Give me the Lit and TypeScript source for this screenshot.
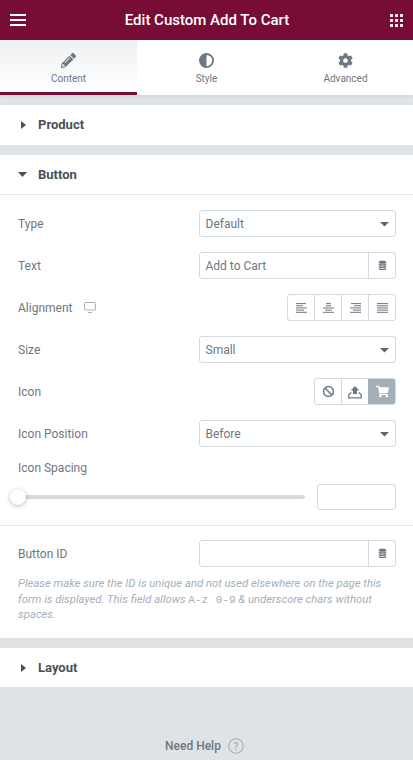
import { LitElement, html, css, svg } from "lit";
import { customElement } from "lit/decorators.js";

const db = html`<svg class="db" viewBox="0 0 12 14"><ellipse cx="6" cy="2.6" rx="5" ry="2.2"/><path d="M1 4.3c1 1.4 9 1.4 10 0v2c-1 1.5-9 1.5-10 0zM1 7.3c1 1.4 9 1.4 10 0v2c-1 1.5-9 1.5-10 0zM1 10.2c1 1.4 9 1.4 10 0v1.3c-.6 2.2-9.4 2.2-10 0z"/></svg>`;
const caret = html`<svg class="sel-caret" viewBox="0 0 10 5"><path d="M0 0h10L5 5z"/></svg>`;
const alignLines = (rows: [number, number][]) => html`<svg class="al" viewBox="0 0 11 10">${rows.map(([x, w], i) => svg`<rect x=${x} y=${i * 2.2} width=${w} height="1.1"/>`)}</svg>`;

@customElement("app-root")
export class AppRoot extends LitElement {
  static styles = css`
    :host { display: block; width: 413px; height: 760px; overflow: hidden; background: #e0e3e6; font-family: Roboto, "Liberation Sans", sans-serif; color: #6d7882; font-size: 12px; }
    * { box-sizing: border-box; }
    .top { height: 40px; background: #770c36; display: flex; align-items: center; justify-content: space-between; padding: 0 10px; color: #fff; }
    .top h1 { margin: 0 2px 0 0; font-size: 15px; font-weight: 500; line-height: 40px; }
    .burger { width: 16px; height: 12px; display: flex; flex-direction: column; justify-content: space-between; }
    .burger i { display: block; height: 2px; background: #fff; }
    .apps { width: 13px; height: 13px; display: grid; grid-template-columns: repeat(3, 3px); grid-template-rows: repeat(3, 3px); gap: 2px; }
    .apps i { background: #f4e8ed; }
    .tabs { height: 55px; display: grid; grid-template-columns: 137px 139px 139px; background: #fff; box-shadow: 0 1px 3px rgba(0,0,0,.08); position: relative; overflow: visible; }
    .tab { display: flex; flex-direction: column; align-items: center; padding-top: 13px; font-size: 10px; line-height: 12px; color: #6d7882; }
    .tab.active { background: linear-gradient(#eef0f2, #fff); border-bottom: 3px solid #770c36; }
    .tab svg { width: 15px; height: 15px; fill: #6d7882; margin-bottom: 5px; display: block; }
    .sec { background: #fff; margin-top: 10px; }
    .sec-h { height: 40px; padding-bottom: 1px; display: flex; align-items: center; padding-left: 21px; font-size: 13px; font-weight: 700; color: #495157; }
    .sec-h.short { height: 39px; padding-bottom: 0; }
    .sec-h .tri { width: 12px; display: flex; margin-right: 5px; }
    .sec-h svg { fill: #495157; }
    .sec-open .sec-h { height: 40px; border-bottom: 1px solid #e6e9ec; padding: 0 0 0 18px; }
    .sec-open .sec-h .tri { width: 15px; margin-right: 5px; }
    .body { padding: 15px 17px 16px 18px; }
    .row { height: 27px; display: flex; align-items: center; justify-content: space-between; margin-bottom: 15px; }
    .lbl { display: flex; align-items: center; gap: 12px; }
    .lbl svg { width: 12px; height: 11px; }
    .ctrl { width: 197px; height: 27px; border: 1px solid #d5dadf; border-radius: 3px; display: flex; align-items: center; padding-left: 5.5px; background: #fff; color: #6d7882; position: relative; }
    .sel-caret { position: absolute; right: 6px; top: 11px; width: 9px; height: 4.5px; fill: #5b6670; }
    .with-db { padding-left: 0; }
    .with-db span { flex: 1; padding-left: 5.5px; }
    .dbbox { width: 27px; height: 25px; border-left: 1px solid #d5dadf; display: flex; align-items: center; justify-content: center; }
    .db { width: 9px; height: 11px; fill: #6d7882; }
    .btns { display: flex; border: 1px solid #d5dadf; border-radius: 3px; height: 27px; overflow: hidden; }
    .btns div { width: 27px; display: flex; align-items: center; justify-content: center; border-left: 1px solid #d5dadf; }
    .btns div:first-child { border-left: 0; width: 26px; }
    .btns .on { background: #a4afb7; border-color: #a4afb7; }
    .al { width: 11px; height: 10px; fill: #7a848d; }
    .ic { width: 13px; height: 13px; display: block; }
    .ic.up { width: 14px; height: 14px; }
    .slabel { height: 14px; line-height: 14px; margin-top: -1px; }
    .slider { display: flex; align-items: center; justify-content: space-between; margin-top: 9px; height: 26px; }
    .track { width: 287px; height: 4px; background: #d5dadf; border-radius: 2px; position: relative; }
    .knob { position: absolute; left: -8px; top: -6px; width: 16px; height: 16px; border-radius: 50%; background: #fff; box-shadow: 0 1px 4px rgba(0,0,0,.28); }
    .num { width: 79px; height: 26px; border: 1px solid #d5dadf; border-radius: 3px; background: #fff; }
    .body.first { padding-bottom: 15px; border-bottom: 1px solid #e6e9ec; }
    .row.last { margin-bottom: 0; }
    .body.second { padding: 14px 17px 0 18px; height: 112px; }
    .help { margin-top: 9px; font-size: 11.3px; font-style: italic; line-height: 15.5px; color: #a4afb7; }
    .help code { font-family: "Liberation Mono", monospace; font-size: 11px; line-height: 1; font-style: normal; word-spacing: 1px; }
    .foot { display: flex; align-items: center; justify-content: center; gap: 7px; margin-top: 50px; padding-right: 4px; font-weight: 500; font-size: 12px; color: #6d7882; height: 18px; }
    .foot svg { width: 16px; height: 16px; }
  `;

  render() {
    const right = html`<svg width="5" height="8" viewBox="0 0 5 8"><path d="M0 0l5 4-5 4z"/></svg>`;
    return html`
      <div class="top">
        <div class="burger"><i></i><i></i><i></i></div>
        <h1>Edit Custom Add To Cart</h1>
        <div class="apps">${Array.from({ length: 9 }, () => html`<i></i>`)}</div>
      </div>
      <div class="tabs">
        <div class="tab active">
          <svg viewBox="0 0 512 512"><path d="M497.9 142.1l-46.1 46.1c-4.7 4.7-12.3 4.7-17 0l-111-111c-4.7-4.7-4.7-12.3 0-17l46.1-46.1c18.7-18.7 49.1-18.7 67.9 0l60.1 60.1c18.8 18.7 18.8 49.1 0 67.9zM284.2 99.8L21.6 362.4.4 483.9c-2.9 16.4 11.4 30.6 27.8 27.8l121.5-21.3 262.6-262.6c4.7-4.7 4.7-12.3 0-17l-111-111c-4.8-4.7-12.4-4.7-17.1 0zM124.1 339.9c-5.5-5.5-5.5-14.3 0-19.8l154-154c5.5-5.5 14.3-5.5 19.8 0s5.5 14.3 0 19.8l-154 154c-5.5 5.5-14.3 5.5-19.8 0zM88 424h48v36.3l-64.5 11.3-31.1-31.1L51.7 376H88v48z"/></svg>
          Content
        </div>
        <div class="tab">
          <svg viewBox="0 0 16 16"><path fill-rule="evenodd" d="M8 0a8 8 0 1 0 0 16A8 8 0 0 0 8 0zm0 2v12a6 6 0 0 0 0-12z"/></svg>
          Style
        </div>
        <div class="tab">
          <svg viewBox="0 0 512 512"><path d="M487.4 315.7l-42.6-24.6c4.3-23.2 4.3-47 0-70.2l42.6-24.6c4.9-2.8 7.1-8.6 5.5-14-11.1-35.6-30-67.8-54.7-94.6-3.8-4.1-10-5.1-14.8-2.3L380.8 110c-17.9-15.4-38.5-27.3-60.8-35.1V25.8c0-5.6-3.9-10.5-9.4-11.7-36.7-8.2-74.3-7.8-109.2 0-5.5 1.2-9.4 6.1-9.4 11.7V75c-22.2 7.9-42.8 19.8-60.8 35.1L88.7 85.5c-4.9-2.8-11-1.9-14.8 2.3-24.7 26.7-43.6 58.9-54.7 94.6-1.7 5.4.6 11.2 5.5 14L67.3 221c-4.3 23.2-4.3 47 0 70.2l-42.6 24.6c-4.9 2.8-7.1 8.6-5.5 14 11.1 35.6 30 67.8 54.7 94.6 3.8 4.1 10 5.1 14.8 2.3l42.6-24.6c17.9 15.4 38.5 27.3 60.8 35.1v49.2c0 5.6 3.9 10.5 9.4 11.7 36.7 8.2 74.3 7.8 109.2 0 5.5-1.2 9.4-6.1 9.4-11.7v-49.2c22.2-7.9 42.8-19.8 60.8-35.1l42.6 24.6c4.9 2.8 11 1.9 14.8-2.3 24.7-26.7 43.6-58.9 54.7-94.6 1.5-5.5-.7-11.3-5.6-14.1zM256 336c-44.1 0-80-35.9-80-80s35.9-80 80-80 80 35.9 80 80-35.9 80-80 80z"/></svg>
          Advanced
        </div>
      </div>

      <section class="sec"><div class="sec-h"><span class="tri">${right}</span>Product</div></section>

      <section class="sec sec-open">
        <div class="sec-h"><span class="tri"><svg width="9" height="5" viewBox="0 0 9 5"><path d="M0 0h9L4.5 5z"/></svg></span>Button</div>
        <div class="body first">
          <div class="row"><div class="lbl">Type</div><div class="ctrl">Default${caret}</div></div>
          <div class="row"><div class="lbl">Text</div><div class="ctrl with-db"><span>Add to Cart</span><div class="dbbox">${db}</div></div></div>
          <div class="row"><div class="lbl">Alignment
            <svg viewBox="0 0 12 11" fill="none" stroke="#a4afb7"><rect x=".5" y=".5" width="11" height="7.5" rx="1"/><path d="M4 10.5h4" /></svg></div>
            <div class="btns">
              <div>${alignLines([[0, 10], [0, 7], [0, 11], [0, 8], [0, 11]])}</div>
              <div>${alignLines([[3, 5], [3, 5], [0, 11], [2, 7], [0, 11]])}</div>
              <div>${alignLines([[1, 10], [4, 7], [0, 11], [3, 8], [0, 11]])}</div>
              <div>${alignLines([[0, 11], [0, 11], [0, 11], [0, 11], [0, 11]])}</div>
            </div>
          </div>
          <div class="row"><div class="lbl">Size</div><div class="ctrl">Small${caret}</div></div>
          <div class="row"><div class="lbl">Icon</div>
            <div class="btns">
              <div><svg class="ic" viewBox="0 0 14 14" fill="none" stroke="#6d7882" stroke-width="1.6"><circle cx="7" cy="7" r="5.4"/><path d="M3.2 3.2l7.6 7.6"/></svg></div>
              <div><svg class="ic up" viewBox="0 0 14 14"><path fill="#6d7882" d="M7 1l4.300 4.600H9v3.500H5V5.600H2.700z"/><path fill="none" stroke="#6d7882" stroke-width="1.300" d="M3.300 7.600L.8 9.800v3h12.400v-3L10.700 7.600"/></svg></div>
              <div class="on"><svg class="ic" viewBox="0 0 576 512" fill="#fff"><path d="M528.12 301.319l47.273-208C578.806 78.301 567.391 64 551.99 64H159.208l-9.166-44.81C147.758 8.021 137.93 0 126.529 0H24C10.745 0 0 10.745 0 24v16c0 13.255 10.745 24 24 24h69.883l70.248 343.435C147.325 417.1 136 435.222 136 456c0 30.928 25.072 56 56 56s56-25.072 56-56c0-15.674-6.447-29.835-16.824-40h209.647C430.447 426.165 424 440.326 424 456c0 30.928 25.072 56 56 56s56-25.072 56-56c0-22.172-12.888-41.332-31.579-50.405l5.517-24.276c3.413-15.018-8.002-29.319-23.403-29.319H218.117l-6.545-32h293.145c11.206 0 20.92-7.754 23.403-18.681z"/></svg></div>
            </div>
          </div>
          <div class="row"><div class="lbl">Icon Position</div><div class="ctrl">Before${caret}</div></div>
          <div class="slabel">Icon Spacing</div>
          <div class="slider"><div class="track"><div class="knob"></div></div><div class="num"></div></div>
        </div>
        <div class="body second">
          <div class="row last"><div class="lbl">Button ID</div><div class="ctrl with-db"><span></span><div class="dbbox">${db}</div></div></div>
          <div class="help">Please make sure the ID is unique and not used elsewhere on the page this form is displayed. This field allows <code>A-z 0-9</code> &amp; underscore chars without spaces.</div>
        </div>
      </section>

      <section class="sec"><div class="sec-h short"><span class="tri">${right}</span>Layout</div></section>

      <div class="foot">Need Help
        <svg viewBox="0 0 17 17"><circle cx="8.500" cy="8.500" r="7.700" fill="none" stroke="#a4afb7" stroke-width="1.200"/><text x="8.500" y="12.500" text-anchor="middle" font-size="11" fill="#a4afb7" font-family="Roboto">?</text></svg>
      </div>
    `;
  }
}
